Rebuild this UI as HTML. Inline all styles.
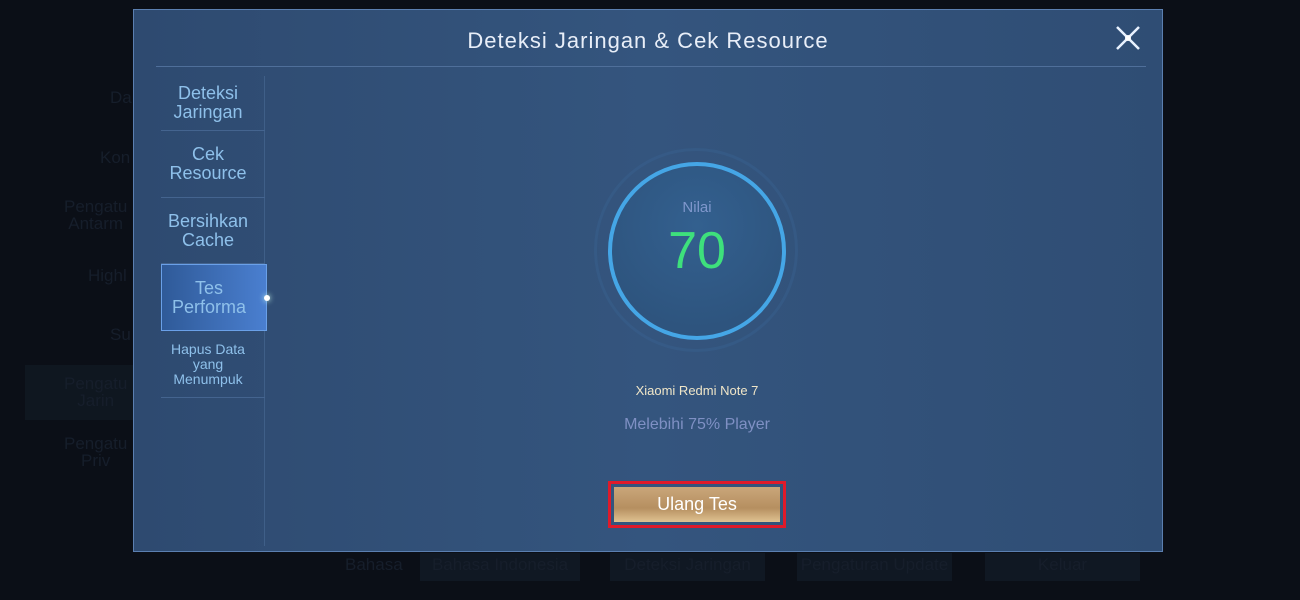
<!DOCTYPE html>
<html><head><style>
body{margin:0;width:1300px;height:600px;overflow:hidden;background:#0b0f17;font-family:"Liberation Sans",sans-serif;position:relative}
.bg{position:absolute;color:#161e2b;font-size:17px;text-align:center}
.panel{position:absolute;left:133px;top:9px;width:1030px;height:543px;background:linear-gradient(90deg,#2e4a70,#34557e 50%,#2f4d74);border:1px solid #5b7fb0;box-sizing:border-box}
.title{position:absolute;left:0;width:100%;top:18px;text-align:center;color:#e8eef8;font-size:22px;letter-spacing:1px}
.hl{position:absolute;left:22px;top:56px;width:990px;height:1px;background:#4f6f9a}
.vl{position:absolute;left:130px;top:66px;width:1px;height:470px;background:#3f5f88}
.item{position:absolute;left:27px;width:104px;padding-right:10px;text-align:center;color:#8ec0ea;font-size:18px;line-height:19px;border-bottom:1px solid #44648f;display:flex;align-items:center;justify-content:center;box-sizing:border-box}
.sel{background:linear-gradient(90deg,#2f5a98,#4a7fd0);border:1px solid #6aa0e8;width:106px}
.circle{position:absolute;left:474px;top:152px;width:170px;height:170px;border:4px solid #45a6e6;border-radius:50%;background:radial-gradient(circle at 50% 35%,#33608f,#2c5078)}
.outer{position:absolute;left:460px;top:138px;width:198px;height:198px;border:3px solid #38608e;border-radius:50%;opacity:.5}
</style></head><body>
<div class="bg" style="left:110px;top:88px">Da</div>
<div class="bg" style="left:100px;top:148px">Kon</div>
<div class="bg" style="left:64px;top:198px;line-height:17px">Pengatu<br>Antarm</div>
<div class="bg" style="left:88px;top:266px">Highl</div>
<div class="bg" style="left:110px;top:325px">Su</div>
<div style="position:absolute;left:25px;top:365px;width:110px;height:55px;background:#0f1720"></div>
<div class="bg" style="left:64px;top:375px;line-height:17px">Pengatu<br>Jarin</div>
<div class="bg" style="left:64px;top:435px;line-height:17px">Pengatu<br>Priv</div>
<div class="bg" style="left:345px;top:555px">Bahasa</div>
<div class="bg" style="left:420px;top:553px;width:160px;height:28px;background:#101823;line-height:24px">Bahasa Indonesia</div>
<div class="bg" style="left:610px;top:553px;width:155px;height:28px;background:#101823;line-height:24px">Deteksi Jaringan</div>
<div class="bg" style="left:797px;top:553px;width:155px;height:28px;background:#101823;line-height:24px">Pengaturan Update</div>
<div class="bg" style="left:985px;top:553px;width:155px;height:28px;background:#101823;line-height:24px">Keluar</div>
<div class="panel">
<div class="title">Deteksi Jaringan &amp; Cek Resource</div>
<svg style="position:absolute;left:979px;top:13px" width="30" height="30" viewBox="0 0 30 30"><path d="M15 15L4 4M15 15L26 4M15 15L4 26M15 15L26 26" stroke="#e8f2ff" stroke-width="2.5"/><circle cx="15" cy="15" r="3" fill="#fff"/></svg>
<div class="hl"></div><div class="vl"></div>
<div class="item" style="top:66px;height:55px">Deteksi<br>Jaringan</div>
<div class="item" style="top:121px;height:67px">Cek<br>Resource</div>
<div class="item" style="top:188px;height:66px">Bersihkan<br>Cache</div>
<div class="item sel" style="top:254px;height:67px">Tes<br>Performa</div>
<div style="position:absolute;left:130px;top:285px;width:6px;height:6px;border-radius:50%;background:#fff;box-shadow:0 0 6px #cfe"></div>
<div class="item" style="top:321px;height:67px;font-size:14px;line-height:15px">Hapus Data<br>yang<br>Menumpuk</div>
<div class="outer"></div>
<div class="circle"></div>
<div style="position:absolute;left:474px;top:189px;width:178px;text-align:center;color:#7f97cc;font-size:15px">Nilai</div>
<div style="position:absolute;left:474px;top:211px;width:178px;text-align:center;color:#3ee07c;font-size:52px">70</div>
<div style="position:absolute;left:400px;top:373px;width:326px;text-align:center;color:#f0e6c8;font-size:13px">Xiaomi Redmi Note 7</div>
<div style="position:absolute;left:400px;top:406px;width:326px;text-align:center;color:#7f90c4;font-size:16px">Melebihi 75% Player</div>
<div style="position:absolute;left:474px;top:471px;width:178px;height:47px;border:3px solid #e01a2a;box-sizing:border-box;padding:3px">
<div style="height:35px;background:linear-gradient(#c9a67a,#b68f60 60%,#e0c291);color:#fff;font-size:18px;text-align:center;line-height:35px">Ulang Tes</div></div>
</div>
</body></html>
